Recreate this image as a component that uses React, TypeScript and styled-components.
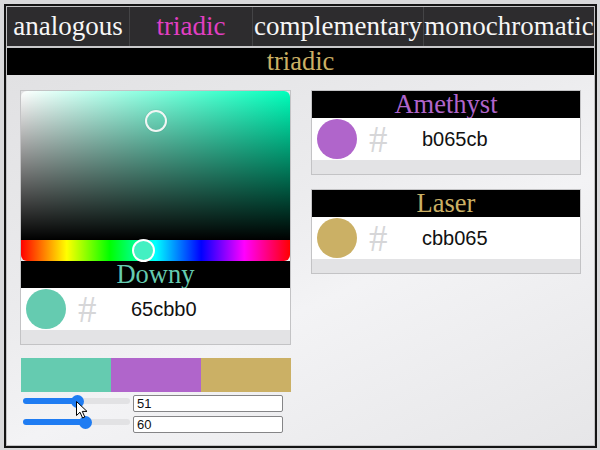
import React from 'react';
import styled, { createGlobalStyle } from 'styled-components';

const Global = createGlobalStyle`
  html, body { margin: 0; padding: 0; background: #d9d9db; }
  body { width: 600px; height: 450px; overflow: hidden; font-family: "Liberation Serif", "Times New Roman", serif; }
  * { box-sizing: border-box; }
`;

const Frame = styled.div`
  margin: 4px 0 0 4px;
  width: 593px;
  height: 444px;
  border: 2px solid #141414;
  display: flex;
  flex-direction: column;
`;

const Inner = styled.div`
  flex: 1;
  min-height: 0;
  border: 1px solid #c4c4c6;
  display: flex;
  flex-direction: column;
`;

const Tabs = styled.nav`
  display: grid;
  grid-template-columns: 122px 123px 171px 1fr;
  height: 41px;
  background: #2d2c2e;
  border-bottom: 2px solid #c9c9cb;
`;

const Tab = styled.div<{ $active?: boolean }>`
  display: flex;
  align-items: center;
  justify-content: center;
  font-size: 27px;
  white-space: nowrap;
  color: ${(p) => (p.$active ? '#e23fc3' : '#f6f6f6')};
  border-left: 1px solid #444446;
  &:first-child { border-left: none; }
`;

const Title = styled.div<{ $color: string }>`
  height: 27px;
  background: #000;
  color: ${(p) => p.$color};
  font-size: 26.5px;
  line-height: 27px;
  text-align: center;
`;

const Content = styled.main`
  flex: 1;
  min-height: 0;
  background: linear-gradient(155deg, #e1e1e3 0%, #ececee 40%, #f3f3f5 58%, #e6e6e8 100%);
  display: grid;
  grid-template-columns: 271px 270px;
  column-gap: 20px;
  padding: 15px 0 0 13px;
  align-items: start;
`;

const Column = styled.div<{ $gap?: number }>`
  display: flex;
  flex-direction: column;
  gap: ${(p) => p.$gap ?? 0}px;
`;

const Card = styled.section`
  border: 1px solid #c3c3c5;
  display: flex;
  flex-direction: column;
`;

const Saturation = styled.div<{ $hue: number }>`
  position: relative;
  height: 149px;
  border-radius: 6px 6px 0 0;
  background:
    linear-gradient(to top, #000, rgba(0, 0, 0, 0)),
    linear-gradient(to right, #fff, hsl(${(p) => p.$hue}, 100%, 50%));
`;

const Ring = styled.div`
  position: absolute;
  width: 22px;
  height: 22px;
  margin: -11px 0 0 -11px;
  border: 2px solid #f1f6f4;
  border-radius: 50%;
  box-shadow: 0 0 1px rgba(0, 0, 0, 0.3);
`;

const HueBar = styled.div`
  position: relative;
  height: 21px;
  border-radius: 0 0 6px 6px;
  background: linear-gradient(to right, #f00 0%, #ff0 17%, #0f0 33%, #0ff 50%, #00f 67%, #f0f 83%, #f00 100%);
`;

const HueKnob = styled.div<{ $hue: number }>`
  position: absolute;
  top: 50%;
  width: 23px;
  height: 23px;
  margin: -11.5px 0 0 -11.5px;
  border-radius: 50%;
  border: 2px solid #fff;
  background: hsl(${(p) => p.$hue}, 85%, 60%);
`;

const NameBar = styled.div<{ $color: string }>`
  height: 27px;
  background: #000;
  color: ${(p) => p.$color};
  font-size: 26.5px;
  line-height: 27px;
  text-align: center;
`;

const SwatchRow = styled.div`
  height: 42px;
  background: #fff;
  display: flex;
  align-items: center;
  padding-left: 5px;
`;

const Dot = styled.div<{ $color: string }>`
  width: 40px;
  height: 40px;
  border-radius: 50%;
  background: ${(p) => p.$color};
`;

const Hash = styled.span`
  width: 53px;
  margin-left: 12px;
  font-family: "Liberation Serif", serif;
  font-size: 37px;
  line-height: 1;
  color: #d6d6d8;
`;

const Hex = styled.span`
  font-family: "Liberation Sans", Arial, sans-serif;
  font-size: 20px;
  color: #111;
`;

const Strip = styled.div`
  height: 14px;
  background: #e3e3e5;
`;

const Palette = styled.div`
  margin: 13px 0 0 1px;
  width: 270px;
  height: 34px;
  display: grid;
  grid-template-columns: repeat(3, 1fr);
`;

const Chip = styled.div<{ $color: string }>`
  background: ${(p) => p.$color};
`;

const Controls = styled.div`
  position: relative;
  margin: 3px 0 0 1px;
  display: flex;
  flex-direction: column;
  gap: 4px;
`;

const ControlRow = styled.div`
  display: flex;
  align-items: flex-start;
  height: 17px;
`;

const Range = styled.input`
  -webkit-appearance: none;
  appearance: none;
  width: 107px;
  height: 12px;
  margin: 0 0 0 2px;
  padding: 0;
  background: transparent;
  &::-webkit-slider-runnable-track {
    height: 6px;
    border-radius: 3px;
    background: linear-gradient(to right, #1f7cf2 var(--fill), #e2e2e4 var(--fill));
  }
  &::-webkit-slider-thumb {
    -webkit-appearance: none;
    width: 13px;
    height: 13px;
    margin-top: -3.5px;
    border: none;
    border-radius: 50%;
    background: #1f7cf2;
  }
`;

const NumberBox = styled.input`
  width: 150px;
  height: 17px;
  margin-left: 3px;
  padding: 0 3px;
  border: 1px solid #858587;
  border-radius: 2px;
  background: #fff;
  font-family: "Liberation Sans", Arial, sans-serif;
  font-size: 13px;
  color: #111;
  outline: none;
`;

const Cursor = styled.svg`
  position: absolute;
  left: 55px;
  top: 6px;
  pointer-events: none;
`;

type Swatch = { name: string; hex: string };

const main: Swatch = { name: 'Downy', hex: '65cbb0' };
const others: Swatch[] = [
  { name: 'Amethyst', hex: 'b065cb' },
  { name: 'Laser', hex: 'cbb065' },
];

function toHsv(hex: string) {
  const r = parseInt(hex.slice(0, 2), 16) / 255;
  const g = parseInt(hex.slice(2, 4), 16) / 255;
  const b = parseInt(hex.slice(4, 6), 16) / 255;
  const max = Math.max(r, g, b);
  const min = Math.min(r, g, b);
  const d = max - min;
  let h = 0;
  if (d) {
    if (max === r) h = ((g - b) / d) % 6;
    else if (max === g) h = (b - r) / d + 2;
    else h = (r - g) / d + 4;
    h *= 60;
    if (h < 0) h += 360;
  }
  return { h, s: max ? d / max : 0, v: max };
}

const SwatchBody = ({ s }: { s: Swatch }) => (
  <>
    <NameBar $color={`#${s.hex}`}>{s.name}</NameBar>
    <SwatchRow>
      <Dot $color={`#${s.hex}`} />
      <Hash>#</Hash>
      <Hex>{s.hex}</Hex>
    </SwatchRow>
    <Strip />
  </>
);

const Slider = ({ value }: { value: number }) => {
  const fill = `calc(6.5px + ${(107 - 13) * (value / 100)}px)`;
  return (
    <Range
      type="range"
      min={0}
      max={100}
      defaultValue={value}
      style={{ ['--fill' as any]: fill }}
    />
  );
};

export default function App() {
  const hsv = toHsv(main.hex);
  return (
    <>
      <Global />
      <Frame>
        <Inner>
          <Tabs>
            <Tab>analogous</Tab>
            <Tab $active>triadic</Tab>
            <Tab>complementary</Tab>
            <Tab>monochromatic</Tab>
          </Tabs>
          <Title $color="#cbb065">triadic</Title>
          <Content>
            <Column>
              <Card>
                <Saturation $hue={hsv.h}>
                  <Ring style={{ left: `${hsv.s * 100}%`, top: `${(1 - hsv.v) * 100}%` }} />
                </Saturation>
                <HueBar>
                  <HueKnob $hue={hsv.h} style={{ left: `${(hsv.h / 360) * 100}%` }} />
                </HueBar>
                <SwatchBody s={main} />
              </Card>
              <Palette>
                <Chip $color={`#${main.hex}`} />
                {others.map((o) => (
                  <Chip key={o.hex} $color={`#${o.hex}`} />
                ))}
              </Palette>
              <Controls>
                <ControlRow>
                  <Slider value={51} />
                  <NumberBox type="text" defaultValue="51" />
                </ControlRow>
                <ControlRow>
                  <Slider value={60} />
                  <NumberBox type="text" defaultValue="60" />
                </ControlRow>
                <Cursor width="12" height="18" viewBox="0 0 12 18">
                  <path
                    d="M0.5 0.5 L0.5 14.5 L4 11.2 L6.6 17 L8.8 16 L6.3 10.4 L11 10.4 Z"
                    fill="#fff"
                    stroke="#000"
                    strokeWidth="1"
                    strokeLinejoin="round"
                  />
                </Cursor>
              </Controls>
            </Column>
            <Column $gap={14}>
              {others.map((o) => (
                <Card key={o.hex}>
                  <SwatchBody s={o} />
                </Card>
              ))}
            </Column>
          </Content>
        </Inner>
      </Frame>
    </>
  );
}
